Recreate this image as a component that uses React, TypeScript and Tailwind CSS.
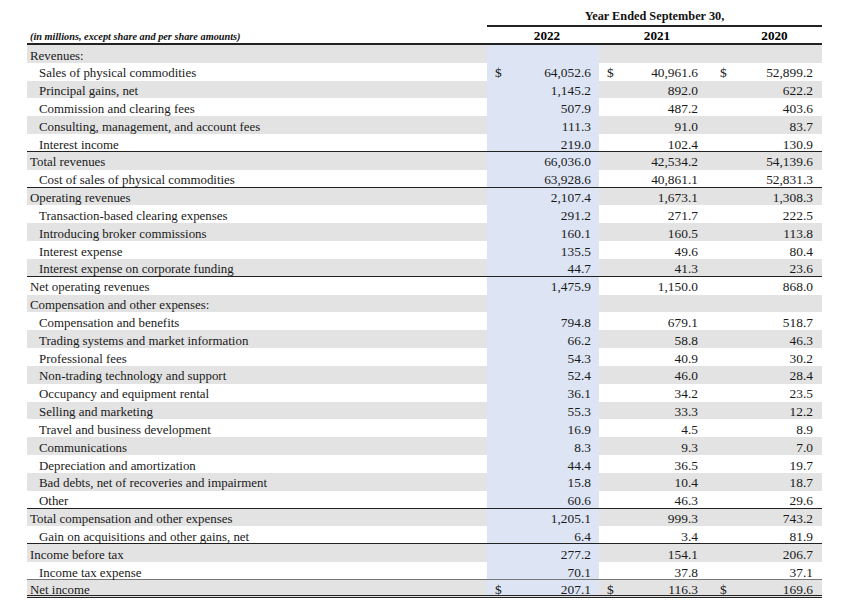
import React from "react";

type Row = {
  label: string;
  top?: boolean;
  v?: [string, string, string];
  dollar?: boolean;
  line?: "solid" | "light" | "double";
};

const rows: Row[] = [
  { label: "Revenues:", top: true },
  { label: "Sales of physical commodities", v: ["64,052.6", "40,961.6", "52,899.2"], dollar: true },
  { label: "Principal gains, net", v: ["1,145.2", "892.0", "622.2"] },
  { label: "Commission and clearing fees", v: ["507.9", "487.2", "403.6"] },
  { label: "Consulting, management, and account fees", v: ["111.3", "91.0", "83.7"] },
  { label: "Interest income", v: ["219.0", "102.4", "130.9"], line: "solid" },
  { label: "Total revenues", top: true, v: ["66,036.0", "42,534.2", "54,139.6"] },
  { label: "Cost of sales of physical commodities", v: ["63,928.6", "40,861.1", "52,831.3"], line: "solid" },
  { label: "Operating revenues", top: true, v: ["2,107.4", "1,673.1", "1,308.3"] },
  { label: "Transaction-based clearing expenses", v: ["291.2", "271.7", "222.5"] },
  { label: "Introducing broker commissions", v: ["160.1", "160.5", "113.8"] },
  { label: "Interest expense", v: ["135.5", "49.6", "80.4"] },
  { label: "Interest expense on corporate funding", v: ["44.7", "41.3", "23.6"], line: "solid" },
  { label: "Net operating revenues", top: true, v: ["1,475.9", "1,150.0", "868.0"] },
  { label: "Compensation and other expenses:", top: true },
  { label: "Compensation and benefits", v: ["794.8", "679.1", "518.7"] },
  { label: "Trading systems and market information", v: ["66.2", "58.8", "46.3"] },
  { label: "Professional fees", v: ["54.3", "40.9", "30.2"] },
  { label: "Non-trading technology and support", v: ["52.4", "46.0", "28.4"] },
  { label: "Occupancy and equipment rental", v: ["36.1", "34.2", "23.5"] },
  { label: "Selling and marketing", v: ["55.3", "33.3", "12.2"] },
  { label: "Travel and business development", v: ["16.9", "4.5", "8.9"] },
  { label: "Communications", v: ["8.3", "9.3", "7.0"] },
  { label: "Depreciation and amortization", v: ["44.4", "36.5", "19.7"] },
  { label: "Bad debts, net of recoveries and impairment", v: ["15.8", "10.4", "18.7"] },
  { label: "Other", v: ["60.6", "46.3", "29.6"], line: "solid" },
  { label: "Total compensation and other expenses", top: true, v: ["1,205.1", "999.3", "743.2"] },
  { label: "Gain on acquisitions and other gains, net", v: ["6.4", "3.4", "81.9"], line: "solid" },
  { label: "Income before tax", top: true, v: ["277.2", "154.1", "206.7"] },
  { label: "Income tax expense", v: ["70.1", "37.8", "37.1"], line: "light" },
  { label: "Net income", top: true, v: ["207.1", "116.3", "169.6"], dollar: true, line: "double" },
];

function NumCell({
  value,
  dollar,
  w,
  pl,
  pr,
  blue,
}: {
  value?: string;
  dollar?: boolean;
  w: string;
  pl: string;
  pr: string;
  blue?: boolean;
}) {
  return (
    <div
      className={`${w} ${pl} ${pr} ${blue ? "bg-[#dde5f4]" : ""} h-full flex justify-between text-[13.4px] leading-[17px] pt-[1.5px] text-[#1a1a1a]`}
    >
      <span>{dollar ? "$" : ""}</span>
      <span>{value ?? ""}</span>
    </div>
  );
}

export default function App() {
  return (
    <div className="w-[845px] h-[601px] bg-white overflow-hidden" style={{ fontFamily: '"Liberation Serif", "Times New Roman", serif' }}>
      <div className="ml-[27px] w-[795px] flex flex-col">
        {/* header row 1 */}
        <div className="h-[27px] flex">
          <div className="w-[460px]" />
          <div className="w-[335px] border-b-2 border-[#222] flex items-end justify-center pb-[3px] text-[12.3px] font-bold leading-none text-[#111]">
            Year Ended September 30,
          </div>
        </div>
        {/* header row 2 */}
        <div className="h-[18px] flex border-b-2 border-[#222]">
          <div className="w-[460px] pl-[3px] flex items-end pb-[0.5px] text-[10.3px] italic font-bold leading-none text-[#111]">
            (in millions, except share and per share amounts)
          </div>
          <div className="w-[112px] flex items-end justify-center pl-[8px] pb-[1px] text-[13.2px] font-bold leading-none">2022</div>
          <div className="w-[112px] flex items-end justify-center pl-[4px] pb-[1px] text-[13.2px] font-bold leading-none">2021</div>
          <div className="w-[111px] flex items-end justify-center pl-[16px] pb-[1px] text-[13.2px] font-bold leading-none">2020</div>
        </div>
        {rows.map((r, i) => {
          const gray = i % 2 === 0;
          const border =
            r.line === "solid"
              ? "border-b border-[#222]"
              : r.line === "light"
              ? "border-b border-[#777]"
              : r.line === "double"
              ? "border-b-[3px] border-double border-[#222]"
              : "";
          return (
            <div
              key={i}
              className={`h-[17.84px] flex ${gray ? "bg-[#e3e3e3]" : "bg-white"} ${border}`}
            >
              <div
                className={`w-[460px] h-full ${r.top ? "pl-[3px]" : "pl-[12px]"} text-[12.9px] leading-[17px] pt-[2.5px] text-[#1a1a1a] whitespace-nowrap`}
              >
                {r.label}
              </div>
              <NumCell value={r.v?.[0]} dollar={r.dollar} w="w-[112px]" pl="pl-[8px]" pr="pr-[8px]" blue />
              <NumCell value={r.v?.[1]} dollar={r.dollar} w="w-[112px]" pl="pl-[8px]" pr="pr-[13px]" />
              <NumCell value={r.v?.[2]} dollar={r.dollar} w="w-[111px]" pl="pl-[9px]" pr="pr-[9px]" />
            </div>
          );
        })}
      </div>
    </div>
  );
}
